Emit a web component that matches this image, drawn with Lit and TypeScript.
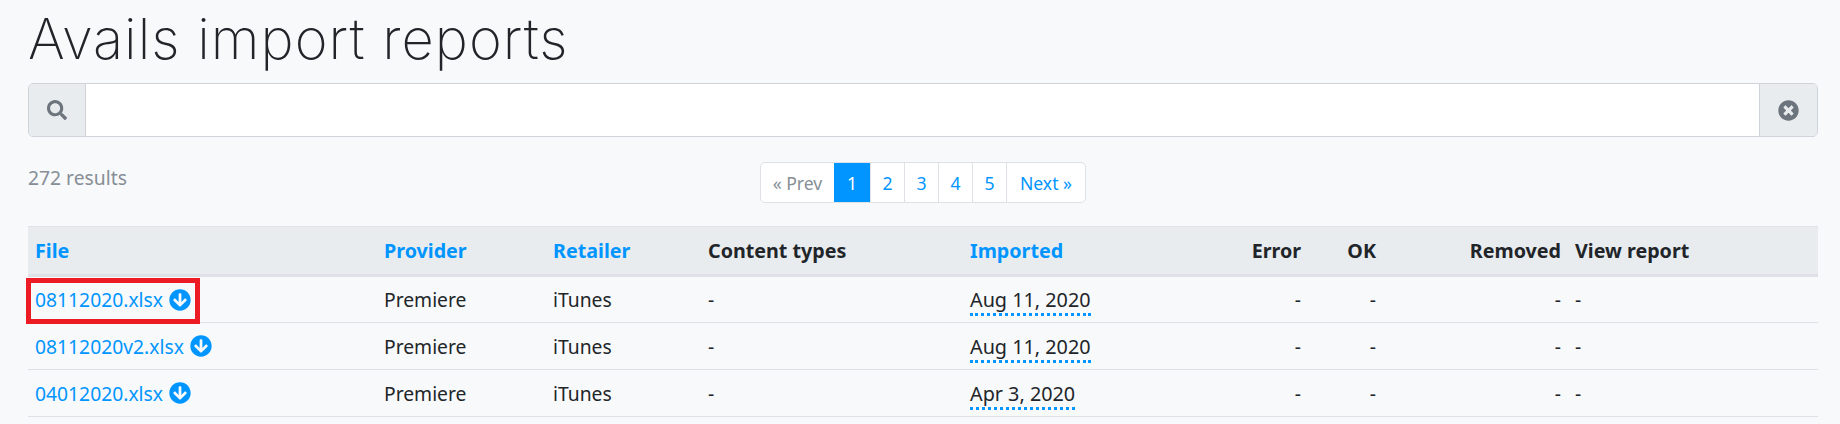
import { LitElement, html, css, svg } from "lit";
import { customElement } from "lit/decorators.js";

const rows = [
  { file: "08112020.xlsx", date: "Aug 11, 2020", mark: true },
  { file: "08112020v2.xlsx", date: "Aug 11, 2020", mark: false },
  { file: "04012020.xlsx", date: "Apr 3, 2020", mark: false },
];

const SEARCH = "M505 442.7L405.3 343c-4.5-4.5-10.6-7-17-7H372c27.6-35.3 44-79.7 44-128C416 93.1 322.9 0 208 0S0 93.1 0 208s93.1 208 208 208c48.3 0 92.7-16.4 128-44v16.3c0 6.4 2.5 12.5 7 17l99.7 99.7c9.4 9.4 24.6 9.4 33.9 0l28.3-28.3c9.4-9.4 9.4-24.6.1-34zM208 336c-70.7 0-128-57.2-128-128 0-70.7 57.2-128 128-128 70.7 0 128 57.2 128 128 0 70.7-57.2 128-128 128z";
const DOWN = "M504 256c0 137-111 248-248 248S8 393 8 256 119 8 256 8s248 111 248 248zm-143.6-28.9L288 302.6V120c0-13.3-10.7-24-24-24h-16c-13.3 0-24 10.7-24 24v182.6l-72.4-75.5c-9.3-9.7-24.8-9.9-34.3-.4l-10.9 11c-9.4 9.4-9.4 24.6 0 33.9L239 404.3c9.4 9.4 24.6 9.4 33.9 0l132.7-132.7c9.4-9.4 9.4-24.6 0-33.9l-10.9-11c-9.5-9.5-25-9.3-34.3.4z";
const CLEAR = "M256 8C119 8 8 119 8 256s111 248 248 248 248-111 248-248S393 8 256 8zm121.6 313.1c4.7 4.7 4.7 12.3 0 17L338 377.6c-4.7 4.7-12.3 4.7-17 0L256 312l-65.1 65.6c-4.7 4.7-12.3 4.7-17 0L134.4 338c-4.7-4.7-4.7-12.3 0-17l65.6-65-65.6-65.1c-4.7-4.7-4.7-12.3 0-17l39.6-39.6c4.7-4.7 12.3-4.7 17 0l65 65.7 65.1-65.6c4.7-4.7 12.3-4.7 17 0l39.6 39.6c4.7 4.7 4.7 12.3 0 17L312 256l65.6 65.1z";

const icon = (d: string, size: number, fill: string) =>
  html`<svg width=${size} height=${size} viewBox="0 0 512 512">${svg`<path d=${d} fill=${fill}></path>`}</svg>`;

@customElement("app-root")
export class AppRoot extends LitElement {
  static styles = css`
    :host { display: block; height: 424px; overflow: hidden; background: #f8f9fa; color: #212529; font-family: "Noto Sans", "Open Sans", sans-serif; font-size: 19.3px; padding: 0 22px 0 28px; box-sizing: border-box; }
    *, *::after { box-sizing: border-box; }
    h1 { margin: 0; height: 83px; font-family: Inter, sans-serif; font-weight: 200; font-size: 56px; letter-spacing: 1px; line-height: 78px; color: #212529; white-space: nowrap; }
    .search { display: flex; height: 54px; border: 1px solid #ced4da; border-radius: 5px; background: #fff; overflow: hidden; }
    .addon { flex: none; background: #e9ecef; display: flex; align-items: center; justify-content: center; }
    .addon.left { width: 57px; border-right: 1px solid #ced4da; }
    .addon.right { width: 58px; border-left: 1px solid #ced4da; }
    .field { flex: 1; }
    .bar { display: grid; grid-template-columns: 1fr auto 1fr; height: 89px; padding-top: 25px; }
    .count { color: #868e96; line-height: 32px; }
    .pager { display: flex; height: 41px; border: 1px solid #dee2e6; border-radius: 5px; background: #fff; overflow: hidden; font-size: 17.6px; }
    .pager a { display: flex; align-items: center; justify-content: center; color: #0095ff; border-left: 1px solid #dee2e6; }
    .pager a:first-child { border-left: 0; color: #868e96; width: 73px; }
    .pager a.on { background: #0095ff; color: #fff; width: 36px; border-left: 0; }
    .pager a.num { width: 34px; }
    .pager a.next { width: 79px; }
    table { width: 100%; border-collapse: collapse; table-layout: fixed; }
    col.c1 { width: 349px; } col.c2 { width: 169px; } col.c3 { width: 155px; }
    col.c4 { width: 262px; } col.c5 { width: 267px; } col.c6 { width: 78px; }
    col.c7 { width: 75px; } col.c8 { width: 185px; } col.c9 { width: 250px; }
    th { background: #e9ecef; border-top: 1px solid #dee2e6; border-bottom: 3px solid #dee2e6; height: 49px; text-align: left; padding: 0 7px; font-weight: 700; font-size: 19.7px; white-space: nowrap; }
    th.link { color: #0095ff; }
    td { height: 47px; border-bottom: 1px solid #dee2e6; padding: 0 7px; white-space: nowrap; }
    .r { text-align: right; }
    .file { color: #0095ff; display: inline-flex; align-items: center; gap: 6px; }
    .mark { position: relative; }
    .mark::after { content: ""; position: absolute; left: -2px; top: 1px; width: 174px; height: 46px; border: 5px solid #ed1c24; pointer-events: none; }
    .date { font-size: 19.8px; border-bottom: 3px dotted #0095ff; padding-bottom: 0; }
    svg { display: block; }
  `;

  render() {
    return html`
      <h1>Avails import reports</h1>
      <div class="search">
        <div class="addon left">${icon(SEARCH, 20, "#6c757d")}</div>
        <div class="field"></div>
        <div class="addon right">${icon(CLEAR, 21, "#6c757d")}</div>
      </div>
      <div class="bar">
        <div class="count">272 results</div>
        <div class="pager">
          <a>« Prev</a><a class="on">1</a><a class="num">2</a><a class="num">3</a><a class="num">4</a><a class="num">5</a><a class="next">Next »</a>
        </div>
        <div></div>
      </div>
      <table>
        <colgroup>
          <col class="c1"/><col class="c2"/><col class="c3"/><col class="c4"/><col class="c5"/><col class="c6"/><col class="c7"/><col class="c8"/><col class="c9"/>
        </colgroup>
        <thead><tr>
          <th class="link">File</th><th class="link">Provider</th><th class="link">Retailer</th><th>Content types</th><th class="link">Imported</th><th class="r">Error</th><th class="r">OK</th><th class="r">Removed</th><th>View report</th>
        </tr></thead>
        <tbody>
          ${rows.map(r => html`<tr>
            <td class=${r.mark ? "mark" : ""}><span class="file">${r.file}${icon(DOWN, 22, "#0095ff")}</span></td>
            <td>Premiere</td><td>iTunes</td><td>-</td>
            <td><span class="date">${r.date}</span></td>
            <td class="r">-</td><td class="r">-</td><td class="r">-</td><td>-</td>
          </tr>`)}
        </tbody>
      </table>
    `;
  }
}
